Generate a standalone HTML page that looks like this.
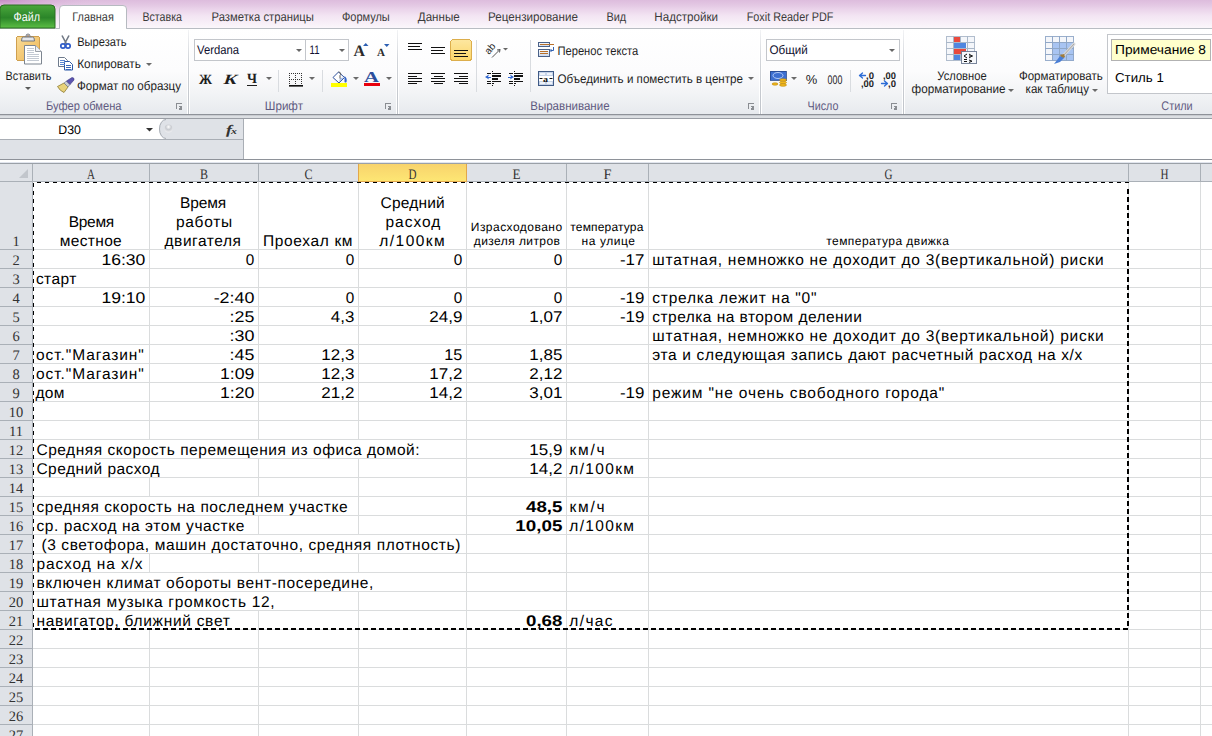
<!DOCTYPE html>
<html><head><meta charset="utf-8"><title>Excel</title>
<style>html,body{margin:0;padding:0;background:#fff;overflow:hidden;width:1212px;height:736px} svg{display:block} text{shape-rendering:auto} path,circle,ellipse{shape-rendering:auto}</style>
</head><body><svg width="1212" height="736" viewBox="0 0 1212 736" shape-rendering="crispEdges" text-rendering="geometricPrecision"><defs><linearGradient id="gstrip" x1="0" y1="0" x2="0" y2="1"><stop offset="0" stop-color="#ddbcdd"/><stop offset="0.2" stop-color="#e4c9e4"/><stop offset="0.32" stop-color="#ead3ea"/><stop offset="0.57" stop-color="#f3e5f3"/><stop offset="1" stop-color="#fbf7fb"/></linearGradient><radialGradient id="gcorner" cx="0" cy="0" r="1"><stop offset="0" stop-color="#c080c0" stop-opacity="0.8"/><stop offset="1" stop-color="#d9b3d9" stop-opacity="0"/></radialGradient><linearGradient id="gfile" x1="0" y1="0" x2="0" y2="1"><stop offset="0" stop-color="#4aa73c"/><stop offset="0.55" stop-color="#2b8529"/><stop offset="1" stop-color="#5cbf45"/></linearGradient><linearGradient id="grib" x1="0" y1="0" x2="0" y2="1"><stop offset="0" stop-color="#ffffff"/><stop offset="0.5" stop-color="#fcfcfd"/><stop offset="0.75" stop-color="#f3f4f6"/><stop offset="1" stop-color="#e7eaee"/></linearGradient><linearGradient id="gsel" x1="0" y1="0" x2="0" y2="1"><stop offset="0" stop-color="#f8d36c"/><stop offset="1" stop-color="#fde674"/></linearGradient><linearGradient id="gbtn" x1="0" y1="0" x2="0" y2="1"><stop offset="0" stop-color="#fde7a0"/><stop offset="1" stop-color="#fbd66a"/></linearGradient></defs>
<rect x="0" y="0" width="1212" height="28" fill="url(#gstrip)" />
<rect x="0" y="0" width="90" height="24" fill="url(#gcorner)" transform="scale(1,0.5)"/>
<rect x="0" y="28" width="1212" height="86" fill="url(#grib)" />
<rect x="0" y="28" width="1212" height="1" fill="#b9bdc3" />
<path d="M0,28 L0,9 Q0,5 4,5 L51,5 Q55,5 55,9 L55,28 Z" fill="url(#gfile)" stroke="#2a6e22" stroke-width="1"/>
<text x="13.5" y="21" font-family="Liberation Sans" font-size="12.5" font-weight="normal" fill="#ffffff" text-anchor="start" textLength="26.5" lengthAdjust="spacingAndGlyphs" >Файл</text>
<path d="M59.5,28.5 L59.5,9 Q59.5,5.5 63,5.5 L123,5.5 Q126.5,5.5 126.5,9 L126.5,28.5" fill="#ffffff" stroke="#b6bac0" stroke-width="1"/>
<rect x="60" y="28" width="66" height="2" fill="#ffffff" />
<text x="72.3" y="21" font-family="Liberation Sans" font-size="12.5" font-weight="normal" fill="#3b3b3b" text-anchor="start" textLength="41.5" lengthAdjust="spacingAndGlyphs" >Главная</text>
<text x="142.4" y="21" font-family="Liberation Sans" font-size="12.5" font-weight="normal" fill="#3b3b3b" text-anchor="start" textLength="39.6" lengthAdjust="spacingAndGlyphs" >Вставка</text>
<text x="211.5" y="21" font-family="Liberation Sans" font-size="12.5" font-weight="normal" fill="#3b3b3b" text-anchor="start" textLength="102.4" lengthAdjust="spacingAndGlyphs" >Разметка страницы</text>
<text x="341.9" y="21" font-family="Liberation Sans" font-size="12.5" font-weight="normal" fill="#3b3b3b" text-anchor="start" textLength="47.9" lengthAdjust="spacingAndGlyphs" >Формулы</text>
<text x="417.8" y="21" font-family="Liberation Sans" font-size="12.5" font-weight="normal" fill="#3b3b3b" text-anchor="start" textLength="41.9" lengthAdjust="spacingAndGlyphs" >Данные</text>
<text x="488.1" y="21" font-family="Liberation Sans" font-size="12.5" font-weight="normal" fill="#3b3b3b" text-anchor="start" textLength="89.8" lengthAdjust="spacingAndGlyphs" >Рецензирование</text>
<text x="606.4" y="21" font-family="Liberation Sans" font-size="12.5" font-weight="normal" fill="#3b3b3b" text-anchor="start" textLength="19.8" lengthAdjust="spacingAndGlyphs" >Вид</text>
<text x="654.3" y="21" font-family="Liberation Sans" font-size="12.5" font-weight="normal" fill="#3b3b3b" text-anchor="start" textLength="63.7" lengthAdjust="spacingAndGlyphs" >Надстройки</text>
<text x="746.7" y="21" font-family="Liberation Sans" font-size="12.5" font-weight="normal" fill="#3b3b3b" text-anchor="start" textLength="86.8" lengthAdjust="spacingAndGlyphs" >Foxit Reader PDF</text>
<rect x="0" y="114" width="1212" height="1" fill="#8e9299" />
<rect x="0" y="115" width="1212" height="1" fill="#c9ccd1" />
<rect x="0" y="116" width="1212" height="2" fill="#dcdfe3" />
<rect x="0" y="118" width="1212" height="1" fill="#9a9ea5" />
<defs><linearGradient id="gsep" x1="0" y1="0" x2="0" y2="1"><stop offset="0" stop-color="#f2f3f5"/><stop offset="0.35" stop-color="#d2d5da"/><stop offset="1" stop-color="#bfc3c9"/></linearGradient></defs>
<rect x="187" y="30" width="1" height="84" fill="#ffffff" />
<rect x="188" y="30" width="1" height="84" fill="url(#gsep)" />
<rect x="189" y="30" width="1" height="84" fill="#ffffff" />
<rect x="396" y="30" width="1" height="84" fill="#ffffff" />
<rect x="397" y="30" width="1" height="84" fill="url(#gsep)" />
<rect x="398" y="30" width="1" height="84" fill="#ffffff" />
<rect x="759" y="30" width="1" height="84" fill="#ffffff" />
<rect x="760" y="30" width="1" height="84" fill="url(#gsep)" />
<rect x="761" y="30" width="1" height="84" fill="#ffffff" />
<rect x="902" y="30" width="1" height="84" fill="#ffffff" />
<rect x="903" y="30" width="1" height="84" fill="url(#gsep)" />
<rect x="904" y="30" width="1" height="84" fill="#ffffff" />
<text x="45.9" y="110" font-family="Liberation Sans" font-size="12.5" font-weight="normal" fill="#5f5a80" text-anchor="start" textLength="75.6" lengthAdjust="spacingAndGlyphs" >Буфер обмена</text>
<text x="264.8" y="110" font-family="Liberation Sans" font-size="12.5" font-weight="normal" fill="#5f5a80" text-anchor="start" textLength="38.2" lengthAdjust="spacingAndGlyphs" >Шрифт</text>
<text x="530.2" y="110" font-family="Liberation Sans" font-size="12.5" font-weight="normal" fill="#5f5a80" text-anchor="start" textLength="79.4" lengthAdjust="spacingAndGlyphs" >Выравнивание</text>
<text x="807.5" y="110" font-family="Liberation Sans" font-size="12.5" font-weight="normal" fill="#5f5a80" text-anchor="start" textLength="30.9" lengthAdjust="spacingAndGlyphs" >Число</text>
<text x="1161.3" y="110" font-family="Liberation Sans" font-size="12.5" font-weight="normal" fill="#5f5a80" text-anchor="start" textLength="31.4" lengthAdjust="spacingAndGlyphs" >Стили</text>
<g shape-rendering="crispEdges"><rect x="176" y="103" width="6" height="1" fill="#8a8d92"/><rect x="176" y="103" width="1" height="6" fill="#8a8d92"/><rect x="179" y="106" width="1" height="1" fill="#8a8d92"/><rect x="180" y="106" width="2" height="4" fill="#8a8d92"/><rect x="179" y="108" width="3" height="2" fill="#8a8d92"/></g>
<g shape-rendering="crispEdges"><rect x="385" y="103" width="6" height="1" fill="#8a8d92"/><rect x="385" y="103" width="1" height="6" fill="#8a8d92"/><rect x="388" y="106" width="1" height="1" fill="#8a8d92"/><rect x="389" y="106" width="2" height="4" fill="#8a8d92"/><rect x="388" y="108" width="3" height="2" fill="#8a8d92"/></g>
<g shape-rendering="crispEdges"><rect x="748" y="103" width="6" height="1" fill="#8a8d92"/><rect x="748" y="103" width="1" height="6" fill="#8a8d92"/><rect x="751" y="106" width="1" height="1" fill="#8a8d92"/><rect x="752" y="106" width="2" height="4" fill="#8a8d92"/><rect x="751" y="108" width="3" height="2" fill="#8a8d92"/></g>
<g shape-rendering="crispEdges"><rect x="891" y="103" width="6" height="1" fill="#8a8d92"/><rect x="891" y="103" width="1" height="6" fill="#8a8d92"/><rect x="894" y="106" width="1" height="1" fill="#8a8d92"/><rect x="895" y="106" width="2" height="4" fill="#8a8d92"/><rect x="894" y="108" width="3" height="2" fill="#8a8d92"/></g>
<defs><linearGradient id="gclip" x1="0" y1="0" x2="1" y2="1"><stop offset="0" stop-color="#f9dc98"/><stop offset="1" stop-color="#eeb655"/></linearGradient></defs>
<rect x="16.5" y="36.5" width="23" height="24" fill="url(#gclip)" stroke="#cf9f4e" stroke-width="1" rx="2"/>
<circle cx="28" cy="36" r="2" fill="#d9dce1" stroke="#6f757f" stroke-width="0.9"/><path d="M21.5,41 L22,38 Q22.3,37 23.5,37 L32.5,37 Q33.7,37 34,38 L34.5,41 Z" fill="#e4e6ea" stroke="#6f757f" stroke-width="1"/><circle cx="28" cy="36" r="0.8" fill="#8a5a2a"/>
<path d="M24.5,45.5 h11 l6,6 v12.5 h-17 z" fill="#ffffff" stroke="#7d8590" stroke-width="1"/><path d="M35.5,45.5 v6 h6" fill="#eef0f3" stroke="#9aa0a8" stroke-width="1"/>
<rect x="27" y="48" width="7" height="1" fill="#c3c9d2" />
<rect x="27" y="50" width="7" height="1" fill="#c3c9d2" />
<rect x="27" y="52" width="7" height="1" fill="#c3c9d2" />
<rect x="27" y="54" width="12" height="1" fill="#c3c9d2" />
<rect x="27" y="56" width="12" height="1" fill="#c3c9d2" />
<rect x="27" y="58" width="12" height="1" fill="#c3c9d2" />
<rect x="27" y="60" width="12" height="1" fill="#c3c9d2" />
<text x="5.6" y="80" font-family="Liberation Sans" font-size="12.5" font-weight="normal" fill="#1e1e1e" text-anchor="start" textLength="45.9" lengthAdjust="spacingAndGlyphs" >Вставить</text>
<path d="M25,87 h6 l-3,3 z" fill="#5a5a5a"/>
<path d="M62,35.5 L66.5,44 M69,35.5 L64.5,44" stroke="#6f7784" stroke-width="1.6" fill="none"/>
<circle cx="63" cy="46" r="2.2" fill="none" stroke="#2f5cc8" stroke-width="1.7"/><circle cx="68" cy="46" r="2.2" fill="none" stroke="#2f5cc8" stroke-width="1.7"/>
<text x="77.2" y="46" font-family="Liberation Sans" font-size="12.5" font-weight="normal" fill="#1e1e1e" text-anchor="start" textLength="49.4" lengthAdjust="spacingAndGlyphs" >Вырезать</text>
<path d="M58.5,57.5 h6 l3,3 v6 h-9 z" fill="#fff" stroke="#6e7a8c"/><path d="M64.5,61.5 h5 l3,3 v5.5 h-8 z" fill="#fff" stroke="#2c59a8"/>
<rect x="60" y="60" width="5" height="1" fill="#5b86d0" />
<rect x="60" y="62" width="5" height="1" fill="#5b86d0" />
<rect x="60" y="64" width="5" height="1" fill="#5b86d0" />
<rect x="66" y="65" width="5" height="1" fill="#3a66b8" />
<rect x="66" y="67" width="5" height="1" fill="#3a66b8" />
<rect x="66" y="69" width="5" height="1" fill="#3a66b8" />
<text x="77.2" y="67.5" font-family="Liberation Sans" font-size="12.5" font-weight="normal" fill="#1e1e1e" text-anchor="start" textLength="63.6" lengthAdjust="spacingAndGlyphs" >Копировать</text>
<path d="M146,63 h6 l-3,3 z" fill="#6a6a6a"/>
<path d="M57.5,86.5 L64,83 L68,87 L64,92.5 Q60,91 57.5,86.5 Z" fill="#e8d27a" stroke="#8d7a34" stroke-width="0.8"/>
<path d="M64,83 L66.5,81 L70,84.5 L68,87 Z" fill="#c9cdd4" stroke="#6a6f78" stroke-width="0.6"/>
<path d="M66.5,81 L72,77.5 Q74.5,77.5 74,80 L70,84.5 Z" fill="#5d55b0" stroke="#3b3580" stroke-width="0.6"/>
<text x="77" y="90" font-family="Liberation Sans" font-size="12.5" font-weight="normal" fill="#1e1e1e" text-anchor="start" textLength="104.0" lengthAdjust="spacingAndGlyphs" >Формат по образцу</text>
<rect x="194.5" y="39.5" width="111" height="21" fill="#ffffff" stroke="#c3c6cb" stroke-width="1"/>
<rect x="305.5" y="39.5" width="43" height="21" fill="#ffffff" stroke="#c3c6cb" stroke-width="1"/>
<text x="197" y="54" font-family="Liberation Sans" font-size="12.5" font-weight="normal" fill="#101030" text-anchor="start" textLength="42.0" lengthAdjust="spacingAndGlyphs" >Verdana</text>
<text x="309.5" y="54" font-family="Liberation Sans" font-size="12.5" font-weight="normal" fill="#101030" text-anchor="start" textLength="10.0" lengthAdjust="spacingAndGlyphs" >11</text>
<path d="M296,49 h6 l-3,3 z" fill="#666"/><path d="M339,49 h6 l-3,3 z" fill="#666"/>
<text x="353.5" y="56" font-family="Liberation Serif" font-size="16" font-weight="bold" fill="#2a2a2a" text-anchor="start" textLength="11.5" lengthAdjust="spacingAndGlyphs" >A</text>
<path d="M363,46 h5.5 l-2.75,-3 z" fill="#2c5fb3"/>
<text x="377" y="56" font-family="Liberation Serif" font-size="11" font-weight="bold" fill="#2a2a2a" text-anchor="start" textLength="8.0" lengthAdjust="spacingAndGlyphs" >A</text>
<path d="M384,44 h5.5 l-2.75,3 z" fill="#2c5fb3"/>
<text x="199" y="84" font-family="Liberation Serif" font-size="14" font-weight="bold" fill="#1e1e1e" text-anchor="start" textLength="13.0" lengthAdjust="spacingAndGlyphs" >Ж</text>
<g transform="translate(229,84) skewX(-18)">
<text x="-6" y="0" font-family="Liberation Serif" font-size="14" font-weight="bold" fill="#1e1e1e" text-anchor="start" textLength="13.0" lengthAdjust="spacingAndGlyphs" >К</text>
</g>
<text x="247" y="83" font-family="Liberation Serif" font-size="14" font-weight="bold" fill="#1e1e1e" text-anchor="start" textLength="10.0" lengthAdjust="spacingAndGlyphs" >Ч</text>
<rect x="247" y="85" width="10" height="1" fill="#1e1e1e" />
<path d="M266,77 h6 l-3,3 z" fill="#6a6a6a"/>
<path d="M309,77 h6 l-3,3 z" fill="#6a6a6a"/>
<path d="M353,77 h6 l-3,3 z" fill="#6a6a6a"/>
<path d="M386,77 h6 l-3,3 z" fill="#6a6a6a"/>
<rect x="278" y="70" width="1" height="22" fill="#d9dce0" />
<rect x="322" y="70" width="1" height="22" fill="#d9dce0" />
<g shape-rendering="crispEdges"><rect x="289" y="73" width="1" height="1" fill="#333"/><rect x="291" y="73" width="1" height="1" fill="#333"/><rect x="293" y="73" width="1" height="1" fill="#333"/><rect x="295" y="73" width="1" height="1" fill="#333"/><rect x="297" y="73" width="1" height="1" fill="#333"/><rect x="299" y="73" width="1" height="1" fill="#333"/><rect x="301" y="73" width="1" height="1" fill="#333"/><rect x="289" y="75" width="1" height="1" fill="#333"/><rect x="295" y="75" width="1" height="1" fill="#333"/><rect x="301" y="75" width="1" height="1" fill="#333"/><rect x="289" y="77" width="1" height="1" fill="#333"/><rect x="295" y="77" width="1" height="1" fill="#333"/><rect x="301" y="77" width="1" height="1" fill="#333"/><rect x="289" y="79" width="1" height="1" fill="#333"/><rect x="291" y="79" width="1" height="1" fill="#333"/><rect x="293" y="79" width="1" height="1" fill="#333"/><rect x="295" y="79" width="1" height="1" fill="#333"/><rect x="297" y="79" width="1" height="1" fill="#333"/><rect x="299" y="79" width="1" height="1" fill="#333"/><rect x="301" y="79" width="1" height="1" fill="#333"/><rect x="289" y="81" width="1" height="1" fill="#333"/><rect x="295" y="81" width="1" height="1" fill="#333"/><rect x="301" y="81" width="1" height="1" fill="#333"/><rect x="289" y="83" width="1" height="1" fill="#333"/><rect x="295" y="83" width="1" height="1" fill="#333"/><rect x="301" y="83" width="1" height="1" fill="#333"/></g>
<rect x="289" y="85" width="14" height="1" fill="#111" />
<rect x="289" y="86" width="14" height="1" fill="#666" />
<path d="M338.5,72 L344.5,77.5 L339,83 L333,77.5 Z" fill="#ffffff" stroke="#2b4f9c" stroke-width="1"/>
<path d="M340,78 L344,77.5 L339,82.5 Z" fill="#a9c0ea"/>
<path d="M338.5,72 a2,2 0 0 1 1.5,3.5 v3" stroke="#555" stroke-width="1" fill="none"/>
<path d="M344.5,76 q3,2 2,6 q-1,1 -2,0 z" fill="#3464c8"/>
<rect x="331" y="83" width="16" height="4" fill="#ffff00" />
<text x="364" y="82" font-family="Liberation Serif" font-size="15" font-weight="bold" fill="#2c4e9c" text-anchor="start" textLength="15.0" lengthAdjust="spacingAndGlyphs" >A</text>
<rect x="364" y="83" width="16" height="3" fill="#e8000d" />
<rect x="408" y="43" width="14" height="1" fill="#111" />
<rect x="408" y="46" width="12" height="1" fill="#111" />
<rect x="408" y="49" width="14" height="1" fill="#111" />
<rect x="431" y="47" width="14" height="1" fill="#111" />
<rect x="431" y="50" width="12" height="1" fill="#111" />
<rect x="431" y="53" width="14" height="1" fill="#111" />
<rect x="450.5" y="39.5" width="21" height="21" fill="url(#gbtn)" stroke="#dcae4c" stroke-width="1" rx="3"/>
<rect x="454" y="50" width="14" height="1" fill="#111" />
<rect x="454" y="53" width="12" height="1" fill="#111" />
<rect x="454" y="56" width="14" height="1" fill="#111" />
<text x="0" y="0" font-family="Liberation Sans" font-size="10" fill="#222" transform="translate(489,55) rotate(-50)">ab</text>
<path d="M492,57.5 L500,49.5 M500,49.5 l-3,0.5 M500,49.5 l-0.5,3" stroke="#555" stroke-width="1" fill="none"/>
<path d="M503,48 h5 l-2.5,2.5 z" fill="#666"/>
<rect x="408" y="73.0" width="14" height="1" fill="#111" />
<rect x="408" y="75.5" width="9" height="1" fill="#111" />
<rect x="408" y="78.0" width="14" height="1" fill="#111" />
<rect x="408" y="80.5" width="14" height="1" fill="#111" />
<rect x="408" y="83.0" width="9" height="1" fill="#111" />
<g transform="translate(431,73)"><rect x="0.0" y="0.0" width="14" height="1" fill="#111"/><rect x="2.5" y="2.5" width="9" height="1" fill="#111"/><rect x="0.0" y="5.0" width="14" height="1" fill="#111"/><rect x="0.0" y="7.5" width="14" height="1" fill="#111"/><rect x="2.5" y="10.0" width="9" height="1" fill="#111"/></g>
<g transform="translate(454,73)"><rect x="0" y="0.0" width="14" height="1" fill="#111"/><rect x="5" y="2.5" width="9" height="1" fill="#111"/><rect x="0" y="5.0" width="14" height="1" fill="#111"/><rect x="0" y="7.5" width="14" height="1" fill="#111"/><rect x="5" y="10.0" width="9" height="1" fill="#111"/></g>
<rect x="476" y="40" width="1" height="52" fill="#d9dce0" />
<rect x="530" y="40" width="1" height="52" fill="#d9dce0" />
<g transform="translate(487,71)"><rect x="5" y="0" width="1" height="1" fill="#111"/><rect x="5" y="14" width="1" height="1" fill="#111"/><rect x="0" y="2" width="4" height="1" fill="#111"/><rect x="5" y="2" width="9" height="1" fill="#111"/><rect x="5" y="4" width="9" height="2" fill="#111"/><rect x="5" y="7" width="6" height="2" fill="#111"/><rect x="0" y="10" width="4" height="1" fill="#111"/><rect x="5" y="10" width="9" height="1" fill="#111"/><rect x="0" y="12" width="4" height="1" fill="#111"/><rect x="5" y="12" width="2" height="1" fill="#111"/><path d="M-2,6 L2,3.5 L1,6 L2,8.5 Z" fill="#2f66d0"/><rect x="1" y="5.5" width="3" height="1" fill="#2f66d0"/></g>
<g transform="translate(509,71)"><rect x="5" y="0" width="1" height="1" fill="#111"/><rect x="5" y="14" width="1" height="1" fill="#111"/><rect x="0" y="2" width="4" height="1" fill="#111"/><rect x="5" y="2" width="9" height="1" fill="#111"/><rect x="5" y="4" width="9" height="2" fill="#111"/><rect x="5" y="7" width="6" height="2" fill="#111"/><rect x="0" y="10" width="4" height="1" fill="#111"/><rect x="5" y="10" width="9" height="1" fill="#111"/><rect x="0" y="12" width="4" height="1" fill="#111"/><rect x="5" y="12" width="2" height="1" fill="#111"/><path d="M5,6 L1,3.5 L2,6 L1,8.5 Z" fill="#2f66d0"/><rect x="-1" y="5.5" width="3" height="1" fill="#2f66d0"/></g>
<defs><linearGradient id="gbox" x1="0" y1="0" x2="0" y2="1"><stop offset="0" stop-color="#ffffff"/><stop offset="1" stop-color="#c9d6ea"/></linearGradient></defs>
<rect x="538.5" y="42.5" width="11" height="4" fill="url(#gbox)" stroke="#4a6188" stroke-width="1" rx="1"/>
<rect x="540" y="44" width="14" height="1" fill="#b8702a" />
<rect x="538.5" y="49.5" width="11" height="7" fill="url(#gbox)" stroke="#4a6188" stroke-width="1" rx="1"/>
<rect x="540" y="51" width="8" height="1" fill="#b8702a" />
<rect x="540" y="53" width="8" height="1" fill="#b8702a" />
<path d="M553.5,47 L553.5,50.5 L550.5,50.5 M551.5,49 l-1.5,1.5 l1.5,1.5" stroke="#2f5fb0" stroke-width="1" fill="none"/>
<text x="557.4" y="54.5" font-family="Liberation Sans" font-size="12.5" font-weight="normal" fill="#1e1e1e" text-anchor="start" textLength="80.9" lengthAdjust="spacingAndGlyphs" >Перенос текста</text>
<rect x="538.5" y="71.5" width="15" height="14" fill="#c6d3e8" stroke="#3f5a86" stroke-width="1"/>
<rect x="540" y="73" width="5" height="2" fill="#eef3fa" />
<rect x="547" y="73" width="5" height="2" fill="#eef3fa" />
<rect x="540" y="82" width="5" height="2" fill="#eef3fa" />
<rect x="547" y="82" width="5" height="2" fill="#eef3fa" />
<rect x="539" y="76" width="14" height="5" fill="#ffffff" />
<text x="543" y="81.5" font-family="Liberation Serif" font-size="8.5" font-weight="bold" fill="#111" text-anchor="start" textLength="5.0" lengthAdjust="spacingAndGlyphs" >a</text>
<path d="M539.5,78.5 h3 M552.5,78.5 h-3" stroke="#111" stroke-width="1"/>
<text x="557.4" y="83" font-family="Liberation Sans" font-size="12.5" font-weight="normal" fill="#1e1e1e" text-anchor="start" textLength="185.6" lengthAdjust="spacingAndGlyphs" >Объединить и поместить в центре</text>
<path d="M748,77 h6 l-3,3 z" fill="#6a6a6a"/>
<rect x="766.5" y="39.5" width="133" height="21" fill="#ffffff" stroke="#c3c6cb" stroke-width="1"/>
<text x="769.5" y="54" font-family="Liberation Sans" font-size="12.5" font-weight="normal" fill="#101030" text-anchor="start" textLength="38.3" lengthAdjust="spacingAndGlyphs" >Общий</text>
<path d="M889,49 h6 l-3,3 z" fill="#666"/>
<rect x="770" y="71" width="16" height="9" fill="#3d6fd0" stroke="#24458a" stroke-width="0.8"/>
<ellipse cx="778" cy="75.5" rx="5" ry="3" fill="none" stroke="#cfe0ff" stroke-width="0.8"/>
<ellipse cx="783" cy="80.0" rx="3.5" ry="1.3" fill="#f2b81c" stroke="#b8860b" stroke-width="0.6"/>
<ellipse cx="783" cy="82.5" rx="3.5" ry="1.3" fill="#f2b81c" stroke="#b8860b" stroke-width="0.6"/>
<ellipse cx="783" cy="85.0" rx="3.5" ry="1.3" fill="#f2b81c" stroke="#b8860b" stroke-width="0.6"/>
<ellipse cx="775" cy="84" rx="3" ry="1.2" fill="#f2b81c" stroke="#b8860b" stroke-width="0.6"/>
<path d="M791,77 h6 l-3,3 z" fill="#6a6a6a"/>
<text x="805.8" y="84" font-family="Liberation Sans" font-size="13" font-weight="normal" fill="#1e1e1e" text-anchor="start" textLength="11.5" lengthAdjust="spacingAndGlyphs" >%</text>
<text x="827.6" y="84" font-family="Liberation Sans" font-size="12.5" font-weight="normal" fill="#1e1e1e" text-anchor="start" textLength="14.8" lengthAdjust="spacingAndGlyphs" >000</text>
<rect x="850" y="70" width="1" height="22" fill="#d9dce0" />
<text x="866" y="79" font-family="Liberation Sans" font-size="9.5" font-weight="bold" fill="#222" text-anchor="start" textLength="8.0" lengthAdjust="spacingAndGlyphs" >,0</text>
<text x="861" y="86.5" font-family="Liberation Sans" font-size="9.5" font-weight="bold" fill="#222" text-anchor="start" textLength="13.0" lengthAdjust="spacingAndGlyphs" >,00</text>
<path d="M859.5,75.5 h6 M859.5,75.5 l3,-2.5 M859.5,75.5 l3,2.5" stroke="#2c6cd6" stroke-width="1.3" fill="none" stroke-linecap="round"/>
<text x="883" y="79" font-family="Liberation Sans" font-size="9.5" font-weight="bold" fill="#222" text-anchor="start" textLength="13.0" lengthAdjust="spacingAndGlyphs" >,00</text>
<text x="888" y="86.5" font-family="Liberation Sans" font-size="9.5" font-weight="bold" fill="#222" text-anchor="start" textLength="8.0" lengthAdjust="spacingAndGlyphs" >,0</text>
<path d="M881.5,83.5 h6 M887.5,83.5 l-3,-2.5 M887.5,83.5 l-3,2.5" stroke="#2c6cd6" stroke-width="1.3" fill="none" stroke-linecap="round"/>
<g transform="translate(946,36)"><rect x="0.5" y="0.5" width="7" height="6" fill="#f4f6fa" stroke="#a9b6c8" stroke-width="0.9"/><rect x="0.5" y="6.5" width="7" height="6" fill="#f4f6fa" stroke="#a9b6c8" stroke-width="0.9"/><rect x="0.5" y="12.5" width="7" height="6" fill="#f4f6fa" stroke="#a9b6c8" stroke-width="0.9"/><rect x="0.5" y="18.5" width="7" height="6" fill="#f4f6fa" stroke="#a9b6c8" stroke-width="0.9"/><rect x="7.5" y="0.5" width="7" height="6" fill="#f4f6fa" stroke="#a9b6c8" stroke-width="0.9"/><rect x="7.5" y="6.5" width="7" height="6" fill="#f4f6fa" stroke="#a9b6c8" stroke-width="0.9"/><rect x="7.5" y="12.5" width="7" height="6" fill="#f4f6fa" stroke="#a9b6c8" stroke-width="0.9"/><rect x="7.5" y="18.5" width="7" height="6" fill="#f4f6fa" stroke="#a9b6c8" stroke-width="0.9"/><rect x="14.5" y="0.5" width="7" height="6" fill="#f4f6fa" stroke="#a9b6c8" stroke-width="0.9"/><rect x="14.5" y="6.5" width="7" height="6" fill="#f4f6fa" stroke="#a9b6c8" stroke-width="0.9"/><rect x="14.5" y="12.5" width="7" height="6" fill="#f4f6fa" stroke="#a9b6c8" stroke-width="0.9"/><rect x="14.5" y="18.5" width="7" height="6" fill="#f4f6fa" stroke="#a9b6c8" stroke-width="0.9"/><rect x="21.5" y="0.5" width="7" height="6" fill="#f4f6fa" stroke="#a9b6c8" stroke-width="0.9"/><rect x="21.5" y="6.5" width="7" height="6" fill="#f4f6fa" stroke="#a9b6c8" stroke-width="0.9"/><rect x="21.5" y="12.5" width="7" height="6" fill="#f4f6fa" stroke="#a9b6c8" stroke-width="0.9"/><rect x="21.5" y="18.5" width="7" height="6" fill="#f4f6fa" stroke="#a9b6c8" stroke-width="0.9"/><rect x="8" y="1" width="6" height="5" fill="#e9493d"/><rect x="8" y="7" width="12" height="5" fill="#4f86e0"/><rect x="8" y="13" width="12" height="5" fill="#e9493d"/><rect x="8" y="19" width="6" height="5" fill="#4f86e0"/><rect x="15.5" y="15.5" width="15" height="12" fill="#f6f8fb" stroke="#6a7890" stroke-width="0.9"/><path d="M21,18 l-3,2 l3,2 M18,23.5 h3 M18,25.5 h3 M23,18 l3,2 l-3,2 M23,24 l3,1.2 l-3,1.2 M23,20 h4" stroke="#111" stroke-width="1" fill="none"/></g>
<text x="937.3" y="80" font-family="Liberation Sans" font-size="12.5" font-weight="normal" fill="#1e1e1e" text-anchor="start" textLength="49.4" lengthAdjust="spacingAndGlyphs" >Условное</text>
<text x="911.6" y="93" font-family="Liberation Sans" font-size="12.5" font-weight="normal" fill="#1e1e1e" text-anchor="start" textLength="93.9" lengthAdjust="spacingAndGlyphs" >форматирование</text>
<path d="M1008,89 h6 l-3,3 z" fill="#6a6a6a"/>
<g transform="translate(1045,36)"><rect x="0.5" y="0.5" width="7" height="6" fill="#f4f6fa" stroke="#8fa6c6" stroke-width="0.9"/><rect x="0.5" y="6.5" width="7" height="6" fill="#f4f6fa" stroke="#8fa6c6" stroke-width="0.9"/><rect x="0.5" y="12.5" width="7" height="6" fill="#f4f6fa" stroke="#8fa6c6" stroke-width="0.9"/><rect x="0.5" y="18.5" width="7" height="6" fill="#f4f6fa" stroke="#8fa6c6" stroke-width="0.9"/><rect x="7.5" y="0.5" width="7" height="6" fill="#f4f6fa" stroke="#8fa6c6" stroke-width="0.9"/><rect x="7.5" y="6.5" width="7" height="6" fill="#a8c4f2" stroke="#8fa6c6" stroke-width="0.9"/><rect x="7.5" y="12.5" width="7" height="6" fill="#a8c4f2" stroke="#8fa6c6" stroke-width="0.9"/><rect x="7.5" y="18.5" width="7" height="6" fill="#a8c4f2" stroke="#8fa6c6" stroke-width="0.9"/><rect x="14.5" y="0.5" width="7" height="6" fill="#f4f6fa" stroke="#8fa6c6" stroke-width="0.9"/><rect x="14.5" y="6.5" width="7" height="6" fill="#a8c4f2" stroke="#8fa6c6" stroke-width="0.9"/><rect x="14.5" y="12.5" width="7" height="6" fill="#a8c4f2" stroke="#8fa6c6" stroke-width="0.9"/><rect x="14.5" y="18.5" width="7" height="6" fill="#a8c4f2" stroke="#8fa6c6" stroke-width="0.9"/><rect x="21.5" y="0.5" width="7" height="6" fill="#f4f6fa" stroke="#8fa6c6" stroke-width="0.9"/><rect x="21.5" y="6.5" width="7" height="6" fill="#a8c4f2" stroke="#8fa6c6" stroke-width="0.9"/><rect x="21.5" y="12.5" width="7" height="6" fill="#a8c4f2" stroke="#8fa6c6" stroke-width="0.9"/><rect x="21.5" y="18.5" width="7" height="6" fill="#a8c4f2" stroke="#8fa6c6" stroke-width="0.9"/><path d="M29,8 L18,20" stroke="#d8d8d8" stroke-width="3" stroke-linecap="round"/><path d="M29,8 L18,20" stroke="#9a9a9a" stroke-width="0.8"/><path d="M15,19 l4,-1 l1,3 l-3,2 z" fill="#a07c3c"/><path d="M15,20 l4,2 l-4,4 l-6,2 z" fill="#4a7fd6"/></g>
<text x="1018.9" y="80" font-family="Liberation Sans" font-size="12.5" font-weight="normal" fill="#1e1e1e" text-anchor="start" textLength="83.9" lengthAdjust="spacingAndGlyphs" >Форматировать</text>
<text x="1025.6" y="93" font-family="Liberation Sans" font-size="12.5" font-weight="normal" fill="#1e1e1e" text-anchor="start" textLength="63.4" lengthAdjust="spacingAndGlyphs" >как таблицу</text>
<path d="M1092,89 h6 l-3,3 z" fill="#6a6a6a"/>
<rect x="1107.5" y="34.5" width="120" height="59" fill="#ffffff" stroke="#c3c6cb" stroke-width="1"/>
<rect x="1111.5" y="39.5" width="99" height="21" fill="#ffffcc" stroke="#b2b2b2" stroke-width="1"/>
<text x="1115" y="54" font-family="Liberation Sans" font-size="13" font-weight="normal" fill="#000" text-anchor="start" textLength="91.0" lengthAdjust="spacingAndGlyphs" >Примечание 8</text>
<text x="1115" y="82" font-family="Liberation Sans" font-size="13" font-weight="normal" fill="#000" text-anchor="start" textLength="48.8" lengthAdjust="spacingAndGlyphs" >Стиль 1</text>
<rect x="0" y="119" width="1212" height="40" fill="#ffffff" />
<rect x="0" y="140" width="243" height="19" fill="#dfe2e7" />
<path d="M243,119 L166,119 A7,10 0 0 0 166,139 L243,139 Z" fill="#dfe2e7"/>
<path d="M166,119.5 A6.5,9.5 0 0 0 166,138.5" stroke="#a9aeb5" fill="none"/>
<rect x="0" y="139" width="244" height="1" fill="#a9aeb5" />
<rect x="243" y="119" width="1" height="40" fill="#a9aeb5" />
<defs><radialGradient id="gdot" cx="0.5" cy="0.3" r="0.7"><stop offset="0" stop-color="#ffffff"/><stop offset="0.5" stop-color="#c8cbd0"/><stop offset="1" stop-color="#f0f0f2"/></radialGradient></defs>
<circle cx="168.5" cy="128.5" r="4" fill="url(#gdot)"/>
<text x="58.3" y="133.5" font-family="Liberation Sans" font-size="12.5" font-weight="normal" fill="#000" text-anchor="start" textLength="22.7" lengthAdjust="spacingAndGlyphs" >D30</text>
<path d="M146,128 h7 l-3.5,3.5 z" fill="#333"/>
<text x="226" y="134" font-family="Liberation Serif" font-size="13" font-weight="bold" fill="#333" text-anchor="start" textLength="6.0" lengthAdjust="spacingAndGlyphs" font-style="italic">f</text>
<text x="231" y="134" font-family="Liberation Serif" font-size="9" font-weight="bold" fill="#333" text-anchor="start" textLength="6.0" lengthAdjust="spacingAndGlyphs" font-style="italic">x</text>
<rect x="0" y="159" width="1212" height="1" fill="#8e9299" />
<rect x="0" y="160" width="1212" height="2" fill="#ffffff" />
<rect x="0" y="162" width="1212" height="1" fill="#e1e5ee" />
<rect x="0" y="163" width="1212" height="1" fill="#9aa0a7" />
<rect x="0" y="164" width="1212" height="17" fill="#dfe2e7" />
<rect x="0" y="164" width="32" height="572" fill="#dfe2e7" />
<rect x="0" y="181" width="1212" height="1" fill="#aab0b7" />
<rect x="32" y="164" width="1" height="572" fill="#aab0b7" />
<path d="M28,178 L28,169 L19,178 Z" fill="#c2c6cc"/>
<rect x="359" y="164" width="107" height="17" fill="url(#gsel)" />
<rect x="358" y="164" width="1" height="17" fill="#e2a74a" />
<rect x="466" y="164" width="1" height="17" fill="#e2a74a" />
<rect x="358" y="181" width="109" height="1" fill="#e2a74a" />
<rect x="149" y="164" width="1" height="17" fill="#aab0b7" />
<rect x="258" y="164" width="1" height="17" fill="#aab0b7" />
<rect x="566" y="164" width="1" height="17" fill="#aab0b7" />
<rect x="648" y="164" width="1" height="17" fill="#aab0b7" />
<rect x="1128" y="164" width="1" height="17" fill="#aab0b7" />
<rect x="1200" y="164" width="1" height="17" fill="#aab0b7" />
<text x="91.0" y="178.5" font-family="Liberation Serif" font-size="14.5" font-weight="normal" fill="#333333" text-anchor="middle" textLength="8.0" lengthAdjust="spacingAndGlyphs" >A</text>
<text x="204.0" y="178.5" font-family="Liberation Serif" font-size="14.5" font-weight="normal" fill="#333333" text-anchor="middle" textLength="8.0" lengthAdjust="spacingAndGlyphs" >B</text>
<text x="308.5" y="178.5" font-family="Liberation Serif" font-size="14.5" font-weight="normal" fill="#333333" text-anchor="middle" textLength="8.0" lengthAdjust="spacingAndGlyphs" >C</text>
<text x="412.5" y="178.5" font-family="Liberation Serif" font-size="14.5" font-weight="normal" fill="#333333" text-anchor="middle" textLength="8.0" lengthAdjust="spacingAndGlyphs" >D</text>
<text x="516.5" y="178.5" font-family="Liberation Serif" font-size="14.5" font-weight="normal" fill="#333333" text-anchor="middle" textLength="8.0" lengthAdjust="spacingAndGlyphs" >E</text>
<text x="607.5" y="178.5" font-family="Liberation Serif" font-size="14.5" font-weight="normal" fill="#333333" text-anchor="middle" textLength="8.0" lengthAdjust="spacingAndGlyphs" >F</text>
<text x="888.5" y="178.5" font-family="Liberation Serif" font-size="14.5" font-weight="normal" fill="#333333" text-anchor="middle" textLength="8.0" lengthAdjust="spacingAndGlyphs" >G</text>
<text x="1164.5" y="178.5" font-family="Liberation Serif" font-size="14.5" font-weight="normal" fill="#333333" text-anchor="middle" textLength="8.0" lengthAdjust="spacingAndGlyphs" >H</text>
<text x="1236.5" y="178.5" font-family="Liberation Serif" font-size="14.5" font-weight="normal" fill="#333333" text-anchor="middle" textLength="8.0" lengthAdjust="spacingAndGlyphs" >I</text>
<rect x="0" y="249" width="32" height="1" fill="#aab0b7" />
<text x="16" y="246" font-family="Liberation Serif" font-size="14.5" font-weight="normal" fill="#333333" text-anchor="middle" >1</text>
<rect x="0" y="268" width="32" height="1" fill="#aab0b7" />
<text x="16" y="265" font-family="Liberation Serif" font-size="14.5" font-weight="normal" fill="#333333" text-anchor="middle" >2</text>
<rect x="0" y="287" width="32" height="1" fill="#aab0b7" />
<text x="16" y="284" font-family="Liberation Serif" font-size="14.5" font-weight="normal" fill="#333333" text-anchor="middle" >3</text>
<rect x="0" y="306" width="32" height="1" fill="#aab0b7" />
<text x="16" y="303" font-family="Liberation Serif" font-size="14.5" font-weight="normal" fill="#333333" text-anchor="middle" >4</text>
<rect x="0" y="325" width="32" height="1" fill="#aab0b7" />
<text x="16" y="322" font-family="Liberation Serif" font-size="14.5" font-weight="normal" fill="#333333" text-anchor="middle" >5</text>
<rect x="0" y="344" width="32" height="1" fill="#aab0b7" />
<text x="16" y="341" font-family="Liberation Serif" font-size="14.5" font-weight="normal" fill="#333333" text-anchor="middle" >6</text>
<rect x="0" y="363" width="32" height="1" fill="#aab0b7" />
<text x="16" y="360" font-family="Liberation Serif" font-size="14.5" font-weight="normal" fill="#333333" text-anchor="middle" >7</text>
<rect x="0" y="382" width="32" height="1" fill="#aab0b7" />
<text x="16" y="379" font-family="Liberation Serif" font-size="14.5" font-weight="normal" fill="#333333" text-anchor="middle" >8</text>
<rect x="0" y="401" width="32" height="1" fill="#aab0b7" />
<text x="16" y="398" font-family="Liberation Serif" font-size="14.5" font-weight="normal" fill="#333333" text-anchor="middle" >9</text>
<rect x="0" y="420" width="32" height="1" fill="#aab0b7" />
<text x="16" y="417" font-family="Liberation Serif" font-size="14.5" font-weight="normal" fill="#333333" text-anchor="middle" >10</text>
<rect x="0" y="439" width="32" height="1" fill="#aab0b7" />
<text x="16" y="436" font-family="Liberation Serif" font-size="14.5" font-weight="normal" fill="#333333" text-anchor="middle" >11</text>
<rect x="0" y="458" width="32" height="1" fill="#aab0b7" />
<text x="16" y="455" font-family="Liberation Serif" font-size="14.5" font-weight="normal" fill="#333333" text-anchor="middle" >12</text>
<rect x="0" y="477" width="32" height="1" fill="#aab0b7" />
<text x="16" y="474" font-family="Liberation Serif" font-size="14.5" font-weight="normal" fill="#333333" text-anchor="middle" >13</text>
<rect x="0" y="496" width="32" height="1" fill="#aab0b7" />
<text x="16" y="493" font-family="Liberation Serif" font-size="14.5" font-weight="normal" fill="#333333" text-anchor="middle" >14</text>
<rect x="0" y="515" width="32" height="1" fill="#aab0b7" />
<text x="16" y="512" font-family="Liberation Serif" font-size="14.5" font-weight="normal" fill="#333333" text-anchor="middle" >15</text>
<rect x="0" y="534" width="32" height="1" fill="#aab0b7" />
<text x="16" y="531" font-family="Liberation Serif" font-size="14.5" font-weight="normal" fill="#333333" text-anchor="middle" >16</text>
<rect x="0" y="553" width="32" height="1" fill="#aab0b7" />
<text x="16" y="550" font-family="Liberation Serif" font-size="14.5" font-weight="normal" fill="#333333" text-anchor="middle" >17</text>
<rect x="0" y="572" width="32" height="1" fill="#aab0b7" />
<text x="16" y="569" font-family="Liberation Serif" font-size="14.5" font-weight="normal" fill="#333333" text-anchor="middle" >18</text>
<rect x="0" y="591" width="32" height="1" fill="#aab0b7" />
<text x="16" y="588" font-family="Liberation Serif" font-size="14.5" font-weight="normal" fill="#333333" text-anchor="middle" >19</text>
<rect x="0" y="610" width="32" height="1" fill="#aab0b7" />
<text x="16" y="607" font-family="Liberation Serif" font-size="14.5" font-weight="normal" fill="#333333" text-anchor="middle" >20</text>
<rect x="0" y="629" width="32" height="1" fill="#aab0b7" />
<text x="16" y="626" font-family="Liberation Serif" font-size="14.5" font-weight="normal" fill="#333333" text-anchor="middle" >21</text>
<rect x="0" y="648" width="32" height="1" fill="#aab0b7" />
<text x="16" y="645" font-family="Liberation Serif" font-size="14.5" font-weight="normal" fill="#333333" text-anchor="middle" >22</text>
<rect x="0" y="667" width="32" height="1" fill="#aab0b7" />
<text x="16" y="664" font-family="Liberation Serif" font-size="14.5" font-weight="normal" fill="#333333" text-anchor="middle" >23</text>
<rect x="0" y="686" width="32" height="1" fill="#aab0b7" />
<text x="16" y="683" font-family="Liberation Serif" font-size="14.5" font-weight="normal" fill="#333333" text-anchor="middle" >24</text>
<rect x="0" y="705" width="32" height="1" fill="#aab0b7" />
<text x="16" y="702" font-family="Liberation Serif" font-size="14.5" font-weight="normal" fill="#333333" text-anchor="middle" >25</text>
<rect x="0" y="724" width="32" height="1" fill="#aab0b7" />
<text x="16" y="721" font-family="Liberation Serif" font-size="14.5" font-weight="normal" fill="#333333" text-anchor="middle" >26</text>
<text x="16" y="740" font-family="Liberation Serif" font-size="14.5" font-weight="normal" fill="#333333" text-anchor="middle" >27</text>
<rect x="33" y="249" width="1179" height="1" fill="#dadcdd" />
<rect x="33" y="268" width="1179" height="1" fill="#dadcdd" />
<rect x="33" y="287" width="1179" height="1" fill="#dadcdd" />
<rect x="33" y="306" width="1179" height="1" fill="#dadcdd" />
<rect x="33" y="325" width="1179" height="1" fill="#dadcdd" />
<rect x="33" y="344" width="1179" height="1" fill="#dadcdd" />
<rect x="33" y="363" width="1179" height="1" fill="#dadcdd" />
<rect x="33" y="382" width="1179" height="1" fill="#dadcdd" />
<rect x="33" y="401" width="1179" height="1" fill="#dadcdd" />
<rect x="33" y="420" width="1179" height="1" fill="#dadcdd" />
<rect x="33" y="439" width="1179" height="1" fill="#dadcdd" />
<rect x="33" y="458" width="1179" height="1" fill="#dadcdd" />
<rect x="33" y="477" width="1179" height="1" fill="#dadcdd" />
<rect x="33" y="496" width="1179" height="1" fill="#dadcdd" />
<rect x="33" y="515" width="1179" height="1" fill="#dadcdd" />
<rect x="33" y="534" width="1179" height="1" fill="#dadcdd" />
<rect x="33" y="553" width="1179" height="1" fill="#dadcdd" />
<rect x="33" y="572" width="1179" height="1" fill="#dadcdd" />
<rect x="33" y="591" width="1179" height="1" fill="#dadcdd" />
<rect x="33" y="610" width="1179" height="1" fill="#dadcdd" />
<rect x="33" y="629" width="1179" height="1" fill="#dadcdd" />
<rect x="33" y="648" width="1179" height="1" fill="#dadcdd" />
<rect x="33" y="667" width="1179" height="1" fill="#dadcdd" />
<rect x="33" y="686" width="1179" height="1" fill="#dadcdd" />
<rect x="33" y="705" width="1179" height="1" fill="#dadcdd" />
<rect x="33" y="724" width="1179" height="1" fill="#dadcdd" />
<rect x="149" y="182" width="1" height="258" fill="#dadcdd" />
<rect x="149" y="458" width="1" height="1" fill="#dadcdd" />
<rect x="149" y="477" width="1" height="20" fill="#dadcdd" />
<rect x="149" y="515" width="1" height="1" fill="#dadcdd" />
<rect x="149" y="534" width="1" height="1" fill="#dadcdd" />
<rect x="149" y="553" width="1" height="20" fill="#dadcdd" />
<rect x="149" y="591" width="1" height="1" fill="#dadcdd" />
<rect x="149" y="610" width="1" height="1" fill="#dadcdd" />
<rect x="149" y="629" width="1" height="107" fill="#dadcdd" />
<rect x="258" y="182" width="1" height="258" fill="#dadcdd" />
<rect x="258" y="458" width="1" height="39" fill="#dadcdd" />
<rect x="258" y="515" width="1" height="20" fill="#dadcdd" />
<rect x="258" y="553" width="1" height="20" fill="#dadcdd" />
<rect x="258" y="591" width="1" height="1" fill="#dadcdd" />
<rect x="258" y="610" width="1" height="126" fill="#dadcdd" />
<rect x="358" y="182" width="1" height="258" fill="#dadcdd" />
<rect x="358" y="458" width="1" height="77" fill="#dadcdd" />
<rect x="358" y="553" width="1" height="20" fill="#dadcdd" />
<rect x="358" y="591" width="1" height="145" fill="#dadcdd" />
<rect x="466" y="182" width="1" height="554" fill="#dadcdd" />
<rect x="566" y="182" width="1" height="554" fill="#dadcdd" />
<rect x="648" y="182" width="1" height="554" fill="#dadcdd" />
<rect x="1128" y="182" width="1" height="554" fill="#dadcdd" />
<rect x="1200" y="182" width="1" height="554" fill="#dadcdd" />
<text x="68.8" y="227.4" font-family="Liberation Sans" font-size="15.5" font-weight="normal" fill="#000" text-anchor="start" textLength="45.3" lengthAdjust="spacing" >Время</text>
<text x="59.8" y="246" font-family="Liberation Sans" font-size="15.5" font-weight="normal" fill="#000" text-anchor="start" textLength="61.9" lengthAdjust="spacing" >местное</text>
<text x="180.1" y="208" font-family="Liberation Sans" font-size="15.5" font-weight="normal" fill="#000" text-anchor="start" textLength="46.1" lengthAdjust="spacing" >Время</text>
<text x="175.9" y="227" font-family="Liberation Sans" font-size="15.5" font-weight="normal" fill="#000" text-anchor="start" textLength="56.2" lengthAdjust="spacing" >работы</text>
<text x="164.5" y="246" font-family="Liberation Sans" font-size="15.5" font-weight="normal" fill="#000" text-anchor="start" textLength="76.5" lengthAdjust="spacing" >двигателя</text>
<text x="262.9" y="246" font-family="Liberation Sans" font-size="15.5" font-weight="normal" fill="#000" text-anchor="start" textLength="89.6" lengthAdjust="spacing" >Проехал км</text>
<text x="380.5" y="208" font-family="Liberation Sans" font-size="15.5" font-weight="normal" fill="#000" text-anchor="start" textLength="64.2" lengthAdjust="spacing" >Средний</text>
<text x="385.5" y="227" font-family="Liberation Sans" font-size="15.5" font-weight="normal" fill="#000" text-anchor="start" textLength="54.7" lengthAdjust="spacing" >расход</text>
<text x="379.3" y="246" font-family="Liberation Sans" font-size="15.5" font-weight="normal" fill="#000" text-anchor="start" textLength="65.4" lengthAdjust="spacing" >л/100км</text>
<text x="470.8" y="231" font-family="Liberation Sans" font-size="12" font-weight="normal" fill="#000" text-anchor="start" textLength="91.3" lengthAdjust="spacing" >Израсходовано</text>
<text x="473.8" y="244.8" font-family="Liberation Sans" font-size="12" font-weight="normal" fill="#000" text-anchor="start" textLength="86.1" lengthAdjust="spacing" >дизеля литров</text>
<text x="570.3" y="231" font-family="Liberation Sans" font-size="12" font-weight="normal" fill="#000" text-anchor="start" textLength="73.1" lengthAdjust="spacing" >температура</text>
<text x="581.6" y="244.8" font-family="Liberation Sans" font-size="12" font-weight="normal" fill="#000" text-anchor="start" textLength="53.4" lengthAdjust="spacing" >на улице</text>
<text x="826.2" y="244.8" font-family="Liberation Sans" font-size="12" font-weight="normal" fill="#000" text-anchor="start" textLength="122.7" lengthAdjust="spacing" >температура движка</text>
<text x="101.42000000000002" y="265" font-family="Liberation Sans" font-size="15.5" font-weight="normal" fill="#000" text-anchor="start" textLength="44.0" lengthAdjust="spacingAndGlyphs" >16:30</text>
<text x="245.86" y="265" font-family="Liberation Sans" font-size="15.5" font-weight="normal" fill="#000" text-anchor="start" textLength="8.5" lengthAdjust="spacingAndGlyphs" >0</text>
<text x="345.85999999999996" y="265" font-family="Liberation Sans" font-size="15.5" font-weight="normal" fill="#000" text-anchor="start" textLength="8.5" lengthAdjust="spacingAndGlyphs" >0</text>
<text x="453.85999999999996" y="265" font-family="Liberation Sans" font-size="15.5" font-weight="normal" fill="#000" text-anchor="start" textLength="8.5" lengthAdjust="spacingAndGlyphs" >0</text>
<text x="553.86" y="265" font-family="Liberation Sans" font-size="15.5" font-weight="normal" fill="#000" text-anchor="start" textLength="8.5" lengthAdjust="spacingAndGlyphs" >0</text>
<text x="620.01" y="265" font-family="Liberation Sans" font-size="15.5" font-weight="normal" fill="#000" text-anchor="start" textLength="24.4" lengthAdjust="spacingAndGlyphs" >-17</text>
<text x="101.42000000000002" y="303" font-family="Liberation Sans" font-size="15.5" font-weight="normal" fill="#000" text-anchor="start" textLength="44.0" lengthAdjust="spacingAndGlyphs" >19:10</text>
<text x="213.65" y="303" font-family="Liberation Sans" font-size="15.5" font-weight="normal" fill="#000" text-anchor="start" textLength="40.8" lengthAdjust="spacingAndGlyphs" >-2:40</text>
<text x="345.85999999999996" y="303" font-family="Liberation Sans" font-size="15.5" font-weight="normal" fill="#000" text-anchor="start" textLength="8.5" lengthAdjust="spacingAndGlyphs" >0</text>
<text x="453.85999999999996" y="303" font-family="Liberation Sans" font-size="15.5" font-weight="normal" fill="#000" text-anchor="start" textLength="8.5" lengthAdjust="spacingAndGlyphs" >0</text>
<text x="553.86" y="303" font-family="Liberation Sans" font-size="15.5" font-weight="normal" fill="#000" text-anchor="start" textLength="8.5" lengthAdjust="spacingAndGlyphs" >0</text>
<text x="620.01" y="303" font-family="Liberation Sans" font-size="15.5" font-weight="normal" fill="#000" text-anchor="start" textLength="24.4" lengthAdjust="spacingAndGlyphs" >-19</text>
<text x="229.5" y="322" font-family="Liberation Sans" font-size="15.5" font-weight="normal" fill="#000" text-anchor="start" textLength="24.9" lengthAdjust="spacingAndGlyphs" >:25</text>
<text x="330.85999999999996" y="322" font-family="Liberation Sans" font-size="15.5" font-weight="normal" fill="#000" text-anchor="start" textLength="23.5" lengthAdjust="spacingAndGlyphs" >4,3</text>
<text x="429.32" y="322" font-family="Liberation Sans" font-size="15.5" font-weight="normal" fill="#000" text-anchor="start" textLength="33.1" lengthAdjust="spacingAndGlyphs" >24,9</text>
<text x="529.3199999999999" y="322" font-family="Liberation Sans" font-size="15.5" font-weight="normal" fill="#000" text-anchor="start" textLength="33.1" lengthAdjust="spacingAndGlyphs" >1,07</text>
<text x="620.01" y="322" font-family="Liberation Sans" font-size="15.5" font-weight="normal" fill="#000" text-anchor="start" textLength="24.4" lengthAdjust="spacingAndGlyphs" >-19</text>
<text x="229.5" y="341" font-family="Liberation Sans" font-size="15.5" font-weight="normal" fill="#000" text-anchor="start" textLength="24.9" lengthAdjust="spacingAndGlyphs" >:30</text>
<text x="229.5" y="360" font-family="Liberation Sans" font-size="15.5" font-weight="normal" fill="#000" text-anchor="start" textLength="24.9" lengthAdjust="spacingAndGlyphs" >:45</text>
<text x="321.32" y="360" font-family="Liberation Sans" font-size="15.5" font-weight="normal" fill="#000" text-anchor="start" textLength="33.1" lengthAdjust="spacingAndGlyphs" >12,3</text>
<text x="444.32" y="360" font-family="Liberation Sans" font-size="15.5" font-weight="normal" fill="#000" text-anchor="start" textLength="18.1" lengthAdjust="spacingAndGlyphs" >15</text>
<text x="529.3199999999999" y="360" font-family="Liberation Sans" font-size="15.5" font-weight="normal" fill="#000" text-anchor="start" textLength="33.1" lengthAdjust="spacingAndGlyphs" >1,85</text>
<text x="219.96" y="379" font-family="Liberation Sans" font-size="15.5" font-weight="normal" fill="#000" text-anchor="start" textLength="34.4" lengthAdjust="spacingAndGlyphs" >1:09</text>
<text x="321.32" y="379" font-family="Liberation Sans" font-size="15.5" font-weight="normal" fill="#000" text-anchor="start" textLength="33.1" lengthAdjust="spacingAndGlyphs" >12,3</text>
<text x="429.32" y="379" font-family="Liberation Sans" font-size="15.5" font-weight="normal" fill="#000" text-anchor="start" textLength="33.1" lengthAdjust="spacingAndGlyphs" >17,2</text>
<text x="529.3199999999999" y="379" font-family="Liberation Sans" font-size="15.5" font-weight="normal" fill="#000" text-anchor="start" textLength="33.1" lengthAdjust="spacingAndGlyphs" >2,12</text>
<text x="219.96" y="398" font-family="Liberation Sans" font-size="15.5" font-weight="normal" fill="#000" text-anchor="start" textLength="34.4" lengthAdjust="spacingAndGlyphs" >1:20</text>
<text x="321.32" y="398" font-family="Liberation Sans" font-size="15.5" font-weight="normal" fill="#000" text-anchor="start" textLength="33.1" lengthAdjust="spacingAndGlyphs" >21,2</text>
<text x="429.32" y="398" font-family="Liberation Sans" font-size="15.5" font-weight="normal" fill="#000" text-anchor="start" textLength="33.1" lengthAdjust="spacingAndGlyphs" >14,2</text>
<text x="529.3199999999999" y="398" font-family="Liberation Sans" font-size="15.5" font-weight="normal" fill="#000" text-anchor="start" textLength="33.1" lengthAdjust="spacingAndGlyphs" >3,01</text>
<text x="620.01" y="398" font-family="Liberation Sans" font-size="15.5" font-weight="normal" fill="#000" text-anchor="start" textLength="24.4" lengthAdjust="spacingAndGlyphs" >-19</text>
<text x="529.3199999999999" y="455" font-family="Liberation Sans" font-size="15.5" font-weight="normal" fill="#000" text-anchor="start" textLength="33.1" lengthAdjust="spacingAndGlyphs" >15,9</text>
<text x="529.3199999999999" y="474" font-family="Liberation Sans" font-size="15.5" font-weight="normal" fill="#000" text-anchor="start" textLength="33.1" lengthAdjust="spacingAndGlyphs" >14,2</text>
<text x="525.99" y="512" font-family="Liberation Sans" font-size="15.5" font-weight="bold" fill="#000" text-anchor="start" textLength="36.4" lengthAdjust="spacingAndGlyphs" >48,5</text>
<text x="515.3199999999999" y="531" font-family="Liberation Sans" font-size="15.5" font-weight="bold" fill="#000" text-anchor="start" textLength="47.1" lengthAdjust="spacingAndGlyphs" >10,05</text>
<text x="525.99" y="626" font-family="Liberation Sans" font-size="15.5" font-weight="bold" fill="#000" text-anchor="start" textLength="36.4" lengthAdjust="spacingAndGlyphs" >0,68</text>
<text x="35.9" y="284" font-family="Liberation Sans" font-size="15.5" font-weight="normal" fill="#000" text-anchor="start" textLength="40.5" lengthAdjust="spacing" >старт</text>
<text x="36.1" y="360" font-family="Liberation Sans" font-size="15.5" font-weight="normal" fill="#000" text-anchor="start" textLength="107.7" lengthAdjust="spacing" >ост.&quot;Магазин&quot;</text>
<text x="36.1" y="379" font-family="Liberation Sans" font-size="15.5" font-weight="normal" fill="#000" text-anchor="start" textLength="107.7" lengthAdjust="spacing" >ост.&quot;Магазин&quot;</text>
<text x="35.5" y="398" font-family="Liberation Sans" font-size="15.5" font-weight="normal" fill="#000" text-anchor="start" textLength="28.8" lengthAdjust="spacing" >дом</text>
<text x="652.3" y="265" font-family="Liberation Sans" font-size="15.5" font-weight="normal" fill="#000" text-anchor="start" textLength="451.3" lengthAdjust="spacing" >штатная, немножко не доходит до 3(вертикальной) риски</text>
<text x="652.3" y="303" font-family="Liberation Sans" font-size="15.5" font-weight="normal" fill="#000" text-anchor="start" textLength="164.2" lengthAdjust="spacing" >стрелка лежит на &quot;0&quot;</text>
<text x="652.3" y="322" font-family="Liberation Sans" font-size="15.5" font-weight="normal" fill="#000" text-anchor="start" textLength="209.6" lengthAdjust="spacing" >стрелка на втором делении</text>
<text x="652.3" y="341" font-family="Liberation Sans" font-size="15.5" font-weight="normal" fill="#000" text-anchor="start" textLength="451.3" lengthAdjust="spacing" >штатная, немножко не доходит до 3(вертикальной) риски</text>
<text x="652.3" y="360" font-family="Liberation Sans" font-size="15.5" font-weight="normal" fill="#000" text-anchor="start" textLength="430.0" lengthAdjust="spacing" >эта и следующая запись дают расчетный расход на х/х</text>
<text x="652.3" y="398" font-family="Liberation Sans" font-size="15.5" font-weight="normal" fill="#000" text-anchor="start" textLength="292.0" lengthAdjust="spacing" >режим &quot;не очень свободного города&quot;</text>
<text x="36.4" y="455" font-family="Liberation Sans" font-size="15.5" font-weight="normal" fill="#000" text-anchor="start" textLength="383.2" lengthAdjust="spacing" >Средняя скорость перемещения из офиса домой:</text>
<text x="569.6" y="455" font-family="Liberation Sans" font-size="15.5" font-weight="normal" fill="#000" text-anchor="start" textLength="35.0" lengthAdjust="spacing" >км/ч</text>
<text x="36.4" y="474" font-family="Liberation Sans" font-size="15.5" font-weight="normal" fill="#000" text-anchor="start" textLength="123.2" lengthAdjust="spacing" >Средний расход</text>
<text x="569.3" y="474" font-family="Liberation Sans" font-size="15.5" font-weight="normal" fill="#000" text-anchor="start" textLength="64.7" lengthAdjust="spacing" >л/100км</text>
<text x="36.4" y="512" font-family="Liberation Sans" font-size="15.5" font-weight="normal" fill="#000" text-anchor="start" textLength="311.2" lengthAdjust="spacing" >средняя скорость на последнем участке</text>
<text x="569.6" y="512" font-family="Liberation Sans" font-size="15.5" font-weight="normal" fill="#000" text-anchor="start" textLength="35.0" lengthAdjust="spacing" >км/ч</text>
<text x="36.4" y="531" font-family="Liberation Sans" font-size="15.5" font-weight="normal" fill="#000" text-anchor="start" textLength="208.0" lengthAdjust="spacing" >ср. расход на этом участке</text>
<text x="569.3" y="531" font-family="Liberation Sans" font-size="15.5" font-weight="normal" fill="#000" text-anchor="start" textLength="64.7" lengthAdjust="spacing" >л/100км</text>
<text x="41.4" y="550" font-family="Liberation Sans" font-size="15.5" font-weight="normal" fill="#000" text-anchor="start" textLength="419.0" lengthAdjust="spacing" >(3 светофора, машин достаточно, средняя плотность)</text>
<text x="36.4" y="569" font-family="Liberation Sans" font-size="15.5" font-weight="normal" fill="#000" text-anchor="start" textLength="106.2" lengthAdjust="spacing" >расход на х/х</text>
<text x="36.4" y="588" font-family="Liberation Sans" font-size="15.5" font-weight="normal" fill="#000" text-anchor="start" textLength="337.0" lengthAdjust="spacing" >включен климат обороты вент-посередине,</text>
<text x="36.4" y="607" font-family="Liberation Sans" font-size="15.5" font-weight="normal" fill="#000" text-anchor="start" textLength="238.2" lengthAdjust="spacing" >штатная музыка громкость 12,</text>
<text x="36.4" y="626" font-family="Liberation Sans" font-size="15.5" font-weight="normal" fill="#000" text-anchor="start" textLength="193.4" lengthAdjust="spacing" >навигатор, ближний свет</text>
<text x="569.3" y="626" font-family="Liberation Sans" font-size="15.5" font-weight="normal" fill="#000" text-anchor="start" textLength="43.3" lengthAdjust="spacing" >л/час</text>
<g fill="#000"><rect x="37" y="182" width="4" height="1"/><rect x="45" y="182" width="4" height="1"/><rect x="53" y="182" width="4" height="1"/><rect x="61" y="182" width="4" height="1"/><rect x="69" y="182" width="4" height="1"/><rect x="77" y="182" width="4" height="1"/><rect x="85" y="182" width="4" height="1"/><rect x="93" y="182" width="4" height="1"/><rect x="101" y="182" width="4" height="1"/><rect x="109" y="182" width="4" height="1"/><rect x="117" y="182" width="4" height="1"/><rect x="125" y="182" width="4" height="1"/><rect x="133" y="182" width="4" height="1"/><rect x="141" y="182" width="4" height="1"/><rect x="149" y="182" width="4" height="1"/><rect x="157" y="182" width="4" height="1"/><rect x="165" y="182" width="4" height="1"/><rect x="173" y="182" width="4" height="1"/><rect x="181" y="182" width="4" height="1"/><rect x="189" y="182" width="4" height="1"/><rect x="197" y="182" width="4" height="1"/><rect x="205" y="182" width="4" height="1"/><rect x="213" y="182" width="4" height="1"/><rect x="221" y="182" width="4" height="1"/><rect x="229" y="182" width="4" height="1"/><rect x="237" y="182" width="4" height="1"/><rect x="245" y="182" width="4" height="1"/><rect x="253" y="182" width="4" height="1"/><rect x="261" y="182" width="4" height="1"/><rect x="269" y="182" width="4" height="1"/><rect x="277" y="182" width="4" height="1"/><rect x="285" y="182" width="4" height="1"/><rect x="293" y="182" width="4" height="1"/><rect x="301" y="182" width="4" height="1"/><rect x="309" y="182" width="4" height="1"/><rect x="317" y="182" width="4" height="1"/><rect x="325" y="182" width="4" height="1"/><rect x="333" y="182" width="4" height="1"/><rect x="341" y="182" width="4" height="1"/><rect x="349" y="182" width="4" height="1"/><rect x="357" y="182" width="4" height="1"/><rect x="365" y="182" width="4" height="1"/><rect x="373" y="182" width="4" height="1"/><rect x="381" y="182" width="4" height="1"/><rect x="389" y="182" width="4" height="1"/><rect x="397" y="182" width="4" height="1"/><rect x="405" y="182" width="4" height="1"/><rect x="413" y="182" width="4" height="1"/><rect x="421" y="182" width="4" height="1"/><rect x="429" y="182" width="4" height="1"/><rect x="437" y="182" width="4" height="1"/><rect x="445" y="182" width="4" height="1"/><rect x="453" y="182" width="4" height="1"/><rect x="461" y="182" width="4" height="1"/><rect x="469" y="182" width="4" height="1"/><rect x="477" y="182" width="4" height="1"/><rect x="485" y="182" width="4" height="1"/><rect x="493" y="182" width="4" height="1"/><rect x="501" y="182" width="4" height="1"/><rect x="509" y="182" width="4" height="1"/><rect x="517" y="182" width="4" height="1"/><rect x="525" y="182" width="4" height="1"/><rect x="533" y="182" width="4" height="1"/><rect x="541" y="182" width="4" height="1"/><rect x="549" y="182" width="4" height="1"/><rect x="557" y="182" width="4" height="1"/><rect x="565" y="182" width="4" height="1"/><rect x="573" y="182" width="4" height="1"/><rect x="581" y="182" width="4" height="1"/><rect x="589" y="182" width="4" height="1"/><rect x="597" y="182" width="4" height="1"/><rect x="605" y="182" width="4" height="1"/><rect x="613" y="182" width="4" height="1"/><rect x="621" y="182" width="4" height="1"/><rect x="629" y="182" width="4" height="1"/><rect x="637" y="182" width="4" height="1"/><rect x="645" y="182" width="4" height="1"/><rect x="653" y="182" width="4" height="1"/><rect x="661" y="182" width="4" height="1"/><rect x="669" y="182" width="4" height="1"/><rect x="677" y="182" width="4" height="1"/><rect x="685" y="182" width="4" height="1"/><rect x="693" y="182" width="4" height="1"/><rect x="701" y="182" width="4" height="1"/><rect x="709" y="182" width="4" height="1"/><rect x="717" y="182" width="4" height="1"/><rect x="725" y="182" width="4" height="1"/><rect x="733" y="182" width="4" height="1"/><rect x="741" y="182" width="4" height="1"/><rect x="749" y="182" width="4" height="1"/><rect x="757" y="182" width="4" height="1"/><rect x="765" y="182" width="4" height="1"/><rect x="773" y="182" width="4" height="1"/><rect x="781" y="182" width="4" height="1"/><rect x="789" y="182" width="4" height="1"/><rect x="797" y="182" width="4" height="1"/><rect x="805" y="182" width="4" height="1"/><rect x="813" y="182" width="4" height="1"/><rect x="821" y="182" width="4" height="1"/><rect x="829" y="182" width="4" height="1"/><rect x="837" y="182" width="4" height="1"/><rect x="845" y="182" width="4" height="1"/><rect x="853" y="182" width="4" height="1"/><rect x="861" y="182" width="4" height="1"/><rect x="869" y="182" width="4" height="1"/><rect x="877" y="182" width="4" height="1"/><rect x="885" y="182" width="4" height="1"/><rect x="893" y="182" width="4" height="1"/><rect x="901" y="182" width="4" height="1"/><rect x="909" y="182" width="4" height="1"/><rect x="917" y="182" width="4" height="1"/><rect x="925" y="182" width="4" height="1"/><rect x="933" y="182" width="4" height="1"/><rect x="941" y="182" width="4" height="1"/><rect x="949" y="182" width="4" height="1"/><rect x="957" y="182" width="4" height="1"/><rect x="965" y="182" width="4" height="1"/><rect x="973" y="182" width="4" height="1"/><rect x="981" y="182" width="4" height="1"/><rect x="989" y="182" width="4" height="1"/><rect x="997" y="182" width="4" height="1"/><rect x="1005" y="182" width="4" height="1"/><rect x="1013" y="182" width="4" height="1"/><rect x="1021" y="182" width="4" height="1"/><rect x="1029" y="182" width="4" height="1"/><rect x="1037" y="182" width="4" height="1"/><rect x="1045" y="182" width="4" height="1"/><rect x="1053" y="182" width="4" height="1"/><rect x="1061" y="182" width="4" height="1"/><rect x="1069" y="182" width="4" height="1"/><rect x="1077" y="182" width="4" height="1"/><rect x="1085" y="182" width="4" height="1"/><rect x="1093" y="182" width="4" height="1"/><rect x="1101" y="182" width="4" height="1"/><rect x="1109" y="182" width="4" height="1"/><rect x="1117" y="182" width="4" height="1"/><rect x="1125" y="182" width="4" height="1"/><rect x="33" y="183" width="1" height="4"/><rect x="33" y="191" width="1" height="4"/><rect x="33" y="199" width="1" height="4"/><rect x="33" y="207" width="1" height="4"/><rect x="33" y="215" width="1" height="4"/><rect x="33" y="223" width="1" height="4"/><rect x="33" y="231" width="1" height="4"/><rect x="33" y="239" width="1" height="4"/><rect x="33" y="247" width="1" height="4"/><rect x="33" y="255" width="1" height="4"/><rect x="33" y="263" width="1" height="4"/><rect x="33" y="271" width="1" height="4"/><rect x="33" y="279" width="1" height="4"/><rect x="33" y="287" width="1" height="4"/><rect x="33" y="295" width="1" height="4"/><rect x="33" y="303" width="1" height="4"/><rect x="33" y="311" width="1" height="4"/><rect x="33" y="319" width="1" height="4"/><rect x="33" y="327" width="1" height="4"/><rect x="33" y="335" width="1" height="4"/><rect x="33" y="343" width="1" height="4"/><rect x="33" y="351" width="1" height="4"/><rect x="33" y="359" width="1" height="4"/><rect x="33" y="367" width="1" height="4"/><rect x="33" y="375" width="1" height="4"/><rect x="33" y="383" width="1" height="4"/><rect x="33" y="391" width="1" height="4"/><rect x="33" y="399" width="1" height="4"/><rect x="33" y="407" width="1" height="4"/><rect x="33" y="415" width="1" height="4"/><rect x="33" y="423" width="1" height="4"/><rect x="33" y="431" width="1" height="4"/><rect x="33" y="439" width="1" height="4"/><rect x="33" y="447" width="1" height="4"/><rect x="33" y="455" width="1" height="4"/><rect x="33" y="463" width="1" height="4"/><rect x="33" y="471" width="1" height="4"/><rect x="33" y="479" width="1" height="4"/><rect x="33" y="487" width="1" height="4"/><rect x="33" y="495" width="1" height="4"/><rect x="33" y="503" width="1" height="4"/><rect x="33" y="511" width="1" height="4"/><rect x="33" y="519" width="1" height="4"/><rect x="33" y="527" width="1" height="4"/><rect x="33" y="535" width="1" height="4"/><rect x="33" y="543" width="1" height="4"/><rect x="33" y="551" width="1" height="4"/><rect x="33" y="559" width="1" height="4"/><rect x="33" y="567" width="1" height="4"/><rect x="33" y="575" width="1" height="4"/><rect x="33" y="583" width="1" height="4"/><rect x="33" y="591" width="1" height="4"/><rect x="33" y="599" width="1" height="4"/><rect x="33" y="607" width="1" height="4"/><rect x="33" y="615" width="1" height="4"/><rect x="33" y="623" width="1" height="4"/><rect x="1127" y="189" width="2" height="5"/><rect x="1127" y="197" width="2" height="5"/><rect x="1127" y="205" width="2" height="5"/><rect x="1127" y="213" width="2" height="5"/><rect x="1127" y="221" width="2" height="5"/><rect x="1127" y="229" width="2" height="5"/><rect x="1127" y="237" width="2" height="5"/><rect x="1127" y="245" width="2" height="5"/><rect x="1127" y="253" width="2" height="5"/><rect x="1127" y="261" width="2" height="5"/><rect x="1127" y="269" width="2" height="5"/><rect x="1127" y="277" width="2" height="5"/><rect x="1127" y="285" width="2" height="5"/><rect x="1127" y="293" width="2" height="5"/><rect x="1127" y="301" width="2" height="5"/><rect x="1127" y="309" width="2" height="5"/><rect x="1127" y="317" width="2" height="5"/><rect x="1127" y="325" width="2" height="5"/><rect x="1127" y="333" width="2" height="5"/><rect x="1127" y="341" width="2" height="5"/><rect x="1127" y="349" width="2" height="5"/><rect x="1127" y="357" width="2" height="5"/><rect x="1127" y="365" width="2" height="5"/><rect x="1127" y="373" width="2" height="5"/><rect x="1127" y="381" width="2" height="5"/><rect x="1127" y="389" width="2" height="5"/><rect x="1127" y="397" width="2" height="5"/><rect x="1127" y="405" width="2" height="5"/><rect x="1127" y="413" width="2" height="5"/><rect x="1127" y="421" width="2" height="5"/><rect x="1127" y="429" width="2" height="5"/><rect x="1127" y="437" width="2" height="5"/><rect x="1127" y="445" width="2" height="5"/><rect x="1127" y="453" width="2" height="5"/><rect x="1127" y="461" width="2" height="5"/><rect x="1127" y="469" width="2" height="5"/><rect x="1127" y="477" width="2" height="5"/><rect x="1127" y="485" width="2" height="5"/><rect x="1127" y="493" width="2" height="5"/><rect x="1127" y="501" width="2" height="5"/><rect x="1127" y="509" width="2" height="5"/><rect x="1127" y="517" width="2" height="5"/><rect x="1127" y="525" width="2" height="5"/><rect x="1127" y="533" width="2" height="5"/><rect x="1127" y="541" width="2" height="5"/><rect x="1127" y="549" width="2" height="5"/><rect x="1127" y="557" width="2" height="5"/><rect x="1127" y="565" width="2" height="5"/><rect x="1127" y="573" width="2" height="5"/><rect x="1127" y="581" width="2" height="5"/><rect x="1127" y="589" width="2" height="5"/><rect x="1127" y="597" width="2" height="5"/><rect x="1127" y="605" width="2" height="5"/><rect x="1127" y="613" width="2" height="5"/><rect x="1127" y="621" width="2" height="5"/><rect x="35" y="628" width="5" height="2"/><rect x="43" y="628" width="5" height="2"/><rect x="51" y="628" width="5" height="2"/><rect x="59" y="628" width="5" height="2"/><rect x="67" y="628" width="5" height="2"/><rect x="75" y="628" width="5" height="2"/><rect x="83" y="628" width="5" height="2"/><rect x="91" y="628" width="5" height="2"/><rect x="99" y="628" width="5" height="2"/><rect x="107" y="628" width="5" height="2"/><rect x="115" y="628" width="5" height="2"/><rect x="123" y="628" width="5" height="2"/><rect x="131" y="628" width="5" height="2"/><rect x="139" y="628" width="5" height="2"/><rect x="147" y="628" width="5" height="2"/><rect x="155" y="628" width="5" height="2"/><rect x="163" y="628" width="5" height="2"/><rect x="171" y="628" width="5" height="2"/><rect x="179" y="628" width="5" height="2"/><rect x="187" y="628" width="5" height="2"/><rect x="195" y="628" width="5" height="2"/><rect x="203" y="628" width="5" height="2"/><rect x="211" y="628" width="5" height="2"/><rect x="219" y="628" width="5" height="2"/><rect x="227" y="628" width="5" height="2"/><rect x="235" y="628" width="5" height="2"/><rect x="243" y="628" width="5" height="2"/><rect x="251" y="628" width="5" height="2"/><rect x="259" y="628" width="5" height="2"/><rect x="267" y="628" width="5" height="2"/><rect x="275" y="628" width="5" height="2"/><rect x="283" y="628" width="5" height="2"/><rect x="291" y="628" width="5" height="2"/><rect x="299" y="628" width="5" height="2"/><rect x="307" y="628" width="5" height="2"/><rect x="315" y="628" width="5" height="2"/><rect x="323" y="628" width="5" height="2"/><rect x="331" y="628" width="5" height="2"/><rect x="339" y="628" width="5" height="2"/><rect x="347" y="628" width="5" height="2"/><rect x="355" y="628" width="5" height="2"/><rect x="363" y="628" width="5" height="2"/><rect x="371" y="628" width="5" height="2"/><rect x="379" y="628" width="5" height="2"/><rect x="387" y="628" width="5" height="2"/><rect x="395" y="628" width="5" height="2"/><rect x="403" y="628" width="5" height="2"/><rect x="411" y="628" width="5" height="2"/><rect x="419" y="628" width="5" height="2"/><rect x="427" y="628" width="5" height="2"/><rect x="435" y="628" width="5" height="2"/><rect x="443" y="628" width="5" height="2"/><rect x="451" y="628" width="5" height="2"/><rect x="459" y="628" width="5" height="2"/><rect x="467" y="628" width="5" height="2"/><rect x="475" y="628" width="5" height="2"/><rect x="483" y="628" width="5" height="2"/><rect x="491" y="628" width="5" height="2"/><rect x="499" y="628" width="5" height="2"/><rect x="507" y="628" width="5" height="2"/><rect x="515" y="628" width="5" height="2"/><rect x="523" y="628" width="5" height="2"/><rect x="531" y="628" width="5" height="2"/><rect x="539" y="628" width="5" height="2"/><rect x="547" y="628" width="5" height="2"/><rect x="555" y="628" width="5" height="2"/><rect x="563" y="628" width="5" height="2"/><rect x="571" y="628" width="5" height="2"/><rect x="579" y="628" width="5" height="2"/><rect x="587" y="628" width="5" height="2"/><rect x="595" y="628" width="5" height="2"/><rect x="603" y="628" width="5" height="2"/><rect x="611" y="628" width="5" height="2"/><rect x="619" y="628" width="5" height="2"/><rect x="627" y="628" width="5" height="2"/><rect x="635" y="628" width="5" height="2"/><rect x="643" y="628" width="5" height="2"/><rect x="651" y="628" width="5" height="2"/><rect x="659" y="628" width="5" height="2"/><rect x="667" y="628" width="5" height="2"/><rect x="675" y="628" width="5" height="2"/><rect x="683" y="628" width="5" height="2"/><rect x="691" y="628" width="5" height="2"/><rect x="699" y="628" width="5" height="2"/><rect x="707" y="628" width="5" height="2"/><rect x="715" y="628" width="5" height="2"/><rect x="723" y="628" width="5" height="2"/><rect x="731" y="628" width="5" height="2"/><rect x="739" y="628" width="5" height="2"/><rect x="747" y="628" width="5" height="2"/><rect x="755" y="628" width="5" height="2"/><rect x="763" y="628" width="5" height="2"/><rect x="771" y="628" width="5" height="2"/><rect x="779" y="628" width="5" height="2"/><rect x="787" y="628" width="5" height="2"/><rect x="795" y="628" width="5" height="2"/><rect x="803" y="628" width="5" height="2"/><rect x="811" y="628" width="5" height="2"/><rect x="819" y="628" width="5" height="2"/><rect x="827" y="628" width="5" height="2"/><rect x="835" y="628" width="5" height="2"/><rect x="843" y="628" width="5" height="2"/><rect x="851" y="628" width="5" height="2"/><rect x="859" y="628" width="5" height="2"/><rect x="867" y="628" width="5" height="2"/><rect x="875" y="628" width="5" height="2"/><rect x="883" y="628" width="5" height="2"/><rect x="891" y="628" width="5" height="2"/><rect x="899" y="628" width="5" height="2"/><rect x="907" y="628" width="5" height="2"/><rect x="915" y="628" width="5" height="2"/><rect x="923" y="628" width="5" height="2"/><rect x="931" y="628" width="5" height="2"/><rect x="939" y="628" width="5" height="2"/><rect x="947" y="628" width="5" height="2"/><rect x="955" y="628" width="5" height="2"/><rect x="963" y="628" width="5" height="2"/><rect x="971" y="628" width="5" height="2"/><rect x="979" y="628" width="5" height="2"/><rect x="987" y="628" width="5" height="2"/><rect x="995" y="628" width="5" height="2"/><rect x="1003" y="628" width="5" height="2"/><rect x="1011" y="628" width="5" height="2"/><rect x="1019" y="628" width="5" height="2"/><rect x="1027" y="628" width="5" height="2"/><rect x="1035" y="628" width="5" height="2"/><rect x="1043" y="628" width="5" height="2"/><rect x="1051" y="628" width="5" height="2"/><rect x="1059" y="628" width="5" height="2"/><rect x="1067" y="628" width="5" height="2"/><rect x="1075" y="628" width="5" height="2"/><rect x="1083" y="628" width="5" height="2"/><rect x="1091" y="628" width="5" height="2"/><rect x="1099" y="628" width="5" height="2"/><rect x="1107" y="628" width="5" height="2"/><rect x="1115" y="628" width="5" height="2"/><rect x="1123" y="628" width="5" height="2"/></g></svg></body></html>
